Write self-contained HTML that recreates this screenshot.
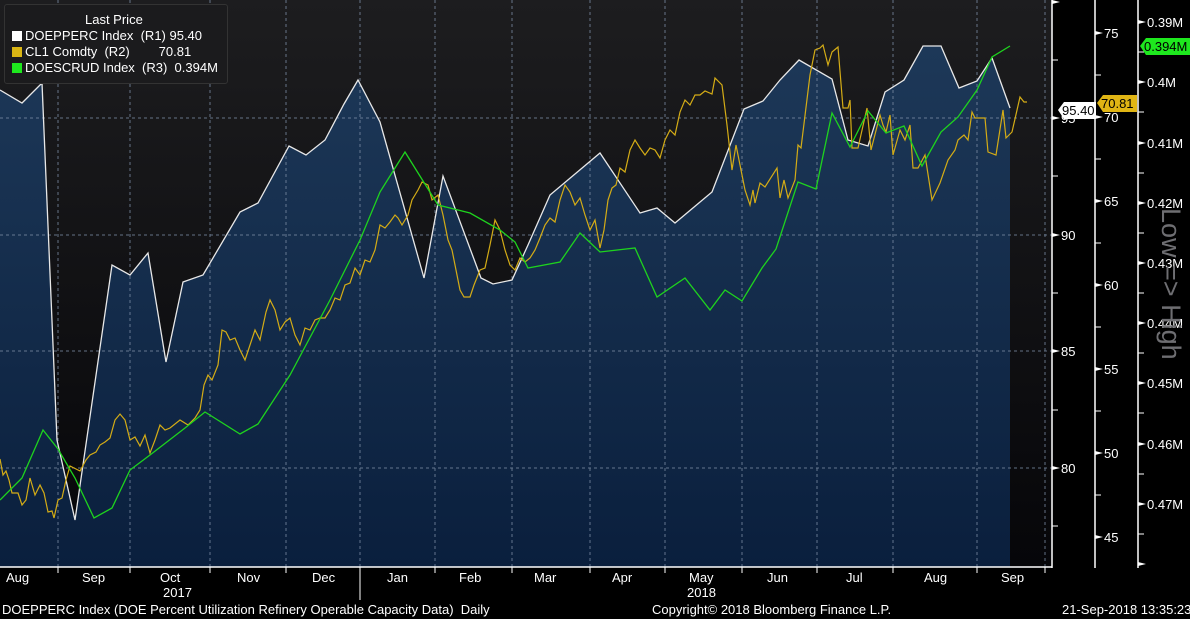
<!DOCTYPE html>
<html><head><meta charset="utf-8"><style>
body{margin:0;background:#000;width:1190px;height:619px;overflow:hidden;font-family:"Liberation Sans Narrow","Liberation Sans",sans-serif;color:#fff}
svg{position:absolute;left:0;top:0}
.lg{position:absolute;left:4px;top:4px;width:222px;height:78px;background:#1b1b1d;border:1px solid #333;border-radius:3px;font-family:"Liberation Sans",sans-serif;font-size:13px;line-height:16px}
.lg div{white-space:pre;position:absolute}
.sq{display:inline-block;width:10px;height:10px;margin-right:3px;vertical-align:-1px}
.ft{position:absolute;font-size:13px;top:602px;white-space:pre}
</style></head><body>
<svg width="1190" height="619" viewBox="0 0 1190 619">
<defs>
<linearGradient id="bg" x1="0" y1="0" x2="0" y2="1"><stop offset="0" stop-color="#1d1d1f"/><stop offset="1" stop-color="#060609"/></linearGradient>
<linearGradient id="fl" x1="0" y1="0" x2="0" y2="1"><stop offset="0" stop-color="#1d3858"/><stop offset="1" stop-color="#0a1f3d"/></linearGradient>
</defs>
<rect x="0" y="0" width="1052" height="567" fill="url(#bg)"/>
<path fill="url(#fl)" stroke="none" d="M0,90 L22,103 L42,83 L57,440 L75,520 L112,265 L130,275 L148,253 L166,362 L183,282 L203,275 L240,212 L258,203 L289,146 L306,155 L325,140 L344,104 L358,80 L380,122 L424,278 L443,176 L481,278 L493,284 L512,280 L528,245 L550,195 L600,153 L640,213 L657,208 L675,223 L712,192 L744,109 L763,101 L780,80 L799,60 L832,79 L848,140 L868,146 L885,92 L904,80 L923,46 L941,46 L959,88 L977,81 L992,58 L1010,108 L1010,567 L0,567Z"/>
<g stroke="#7a8ba3" stroke-width="1" stroke-dasharray="3,3" opacity="0.8">
<line x1="0" y1="118" x2="1052" y2="118"/><line x1="0" y1="235" x2="1052" y2="235"/><line x1="0" y1="351" x2="1052" y2="351"/><line x1="0" y1="468" x2="1052" y2="468"/>
<line x1="58" y1="0" x2="58" y2="567"/><line x1="130" y1="0" x2="130" y2="567"/><line x1="210" y1="0" x2="210" y2="567"/><line x1="286" y1="0" x2="286" y2="567"/><line x1="360" y1="0" x2="360" y2="567"/><line x1="435" y1="0" x2="435" y2="567"/><line x1="512" y1="0" x2="512" y2="567"/><line x1="590" y1="0" x2="590" y2="567"/><line x1="665" y1="0" x2="665" y2="567"/><line x1="742" y1="0" x2="742" y2="567"/><line x1="817" y1="0" x2="817" y2="567"/><line x1="893" y1="0" x2="893" y2="567"/><line x1="977" y1="0" x2="977" y2="567"/><line x1="1045" y1="0" x2="1045" y2="567"/>
</g>
<polyline fill="none" stroke="#e8e8e8" stroke-width="1.3" points="0,90 22,103 42,83 57,440 75,520 112,265 130,275 148,253 166,362 183,282 203,275 240,212 258,203 289,146 306,155 325,140 344,104 358,80 380,122 424,278 443,176 481,278 493,284 512,280 528,245 550,195 600,153 640,213 657,208 675,223 712,192 744,109 763,101 780,80 799,60 832,79 848,140 868,146 885,92 904,80 923,46 941,46 959,88 977,81 992,58 1010,108"/>
<polyline fill="none" stroke="#d4ac16" stroke-width="1.2" points="0,459 3,475 6,471 9,480 12,493 18,493 22,505 26,500 30,478 35,495 40,485 44,493 48,512 52,511 54,518 58,500 62,498 66,480 70,466 74,468 80,471 86,460 90,455 96,452 100,445 105,442 110,438 115,420 120,414 125,420 130,440 135,437 140,446 145,435 150,453 155,440 160,425 165,430 170,428 180,420 188,425 195,418 200,410 204,385 208,375 212,380 218,365 222,330 226,332 230,340 235,338 240,350 245,360 250,345 255,330 260,340 266,312 270,300 275,310 280,330 285,322 290,318 295,335 300,345 305,328 310,330 315,320 320,318 325,318 330,310 335,298 340,300 345,285 350,283 355,268 360,275 365,260 370,262 375,250 380,225 385,228 390,222 395,215 398,218 402,225 408,215 412,200 418,190 422,182 428,185 432,200 438,195 443,215 448,240 452,250 456,270 460,290 464,297 470,297 474,285 480,270 485,268 490,245 495,220 500,230 505,250 510,265 515,270 520,258 525,262 530,258 535,250 540,238 545,225 550,218 555,222 560,200 565,185 570,192 575,205 580,198 585,215 590,230 595,220 600,248 604,230 608,200 612,188 616,185 620,168 625,172 630,150 635,140 640,148 645,155 650,148 655,150 660,158 665,140 670,130 675,135 680,112 685,100 690,105 695,95 700,95 705,91 712,94 715,78 722,85 727,125 732,170 736,145 745,190 750,205 753,190 755,203 760,183 765,187 777,168 780,198 784,180 788,198 795,180 798,145 801,148 810,75 815,50 820,48 823,45 828,65 832,52 838,47 843,108 848,108 850,100 852,148 858,148 867,108 871,150 880,115 883,125 886,132 890,115 893,155 900,130 905,140 910,125 913,168 918,168 925,155 932,200 940,183 948,160 955,150 958,140 964,135 968,140 972,112 975,118 985,118 988,152 996,155 1003,110 1006,138 1012,132 1020,97 1024,102 1027,102"/>
<polyline fill="none" stroke="#1ed31e" stroke-width="1.3" points="0,500 22,478 43,430 58,449 75,478 94,518 112,508 130,470 150,455 185,428 205,412 240,434 258,424 290,375 330,300 360,240 380,192 405,152 438,205 470,213 500,230 515,242 528,268 560,262 580,233 600,252 635,248 657,297 685,278 710,310 725,290 742,301 762,268 776,249 798,182 816,189 832,113 850,147 868,111 886,133 904,126 922,166 941,132 958,117 977,90 992,57 1010,46"/>
<g stroke="#fff" stroke-width="1.5" fill="none">
<line x1="0" y1="567" x2="1052" y2="567"/>
<line x1="1052" y1="0" x2="1052" y2="568"/>
<line x1="1095" y1="0" x2="1095" y2="568"/>
<line x1="1138" y1="0" x2="1138" y2="568"/>
</g>
<g stroke="#fff" stroke-width="1">
<line x1="58" y1="567" x2="58" y2="573"/><line x1="130" y1="567" x2="130" y2="573"/><line x1="210" y1="567" x2="210" y2="573"/><line x1="286" y1="567" x2="286" y2="573"/><line x1="360" y1="567" x2="360" y2="600"/><line x1="435" y1="567" x2="435" y2="573"/><line x1="512" y1="567" x2="512" y2="573"/><line x1="590" y1="567" x2="590" y2="573"/><line x1="665" y1="567" x2="665" y2="573"/><line x1="742" y1="567" x2="742" y2="573"/><line x1="817" y1="567" x2="817" y2="573"/><line x1="893" y1="567" x2="893" y2="573"/><line x1="977" y1="567" x2="977" y2="573"/><line x1="1045" y1="567" x2="1045" y2="573"/>
<line x1="1052" y1="60" x2="1058" y2="60"/><line x1="1052" y1="176" x2="1058" y2="176"/><line x1="1052" y1="293" x2="1058" y2="293"/><line x1="1052" y1="410" x2="1058" y2="410"/><line x1="1052" y1="526" x2="1058" y2="526"/>
<line x1="1095" y1="75" x2="1101" y2="75"/><line x1="1095" y1="159" x2="1101" y2="159"/><line x1="1095" y1="243" x2="1101" y2="243"/><line x1="1095" y1="327" x2="1101" y2="327"/><line x1="1095" y1="411" x2="1101" y2="411"/><line x1="1095" y1="495" x2="1101" y2="495"/>
<line x1="1138" y1="52" x2="1144" y2="52"/><line x1="1138" y1="112" x2="1144" y2="112"/><line x1="1138" y1="173" x2="1144" y2="173"/><line x1="1138" y1="233" x2="1144" y2="233"/><line x1="1138" y1="293" x2="1144" y2="293"/><line x1="1138" y1="353" x2="1144" y2="353"/><line x1="1138" y1="413" x2="1144" y2="413"/><line x1="1138" y1="474" x2="1144" y2="474"/><line x1="1138" y1="534" x2="1144" y2="534"/>
</g>
<g fill="#fff">
<path d="M1052,0 l8,2 l-8,2z"/><path d="M1052,116 l8,2 l-8,2z"/><path d="M1052,233 l8,2 l-8,2z"/><path d="M1052,349 l8,2 l-8,2z"/><path d="M1052,466 l8,2 l-8,2z"/>
<path d="M1095,31 l8,2 l-8,2z"/><path d="M1095,115 l8,2 l-8,2z"/><path d="M1095,199 l8,2 l-8,2z"/><path d="M1095,283 l8,2 l-8,2z"/><path d="M1095,367 l8,2 l-8,2z"/><path d="M1095,451 l8,2 l-8,2z"/><path d="M1095,535 l8,2 l-8,2z"/>
<path d="M1138,20 l8,2 l-8,2z"/><path d="M1138,80 l8,2 l-8,2z"/><path d="M1138,141 l8,2 l-8,2z"/><path d="M1138,201 l8,2 l-8,2z"/><path d="M1138,261 l8,2 l-8,2z"/><path d="M1138,321 l8,2 l-8,2z"/><path d="M1138,381 l8,2 l-8,2z"/><path d="M1138,442 l8,2 l-8,2z"/><path d="M1138,502 l8,2 l-8,2z"/><path d="M1138,562 l8,2 l-8,2z"/>
</g>
<g font-family="Liberation Sans, sans-serif" font-size="13" fill="#fff">
<text x="1061" y="123">95</text><text x="1061" y="240">90</text><text x="1061" y="356">85</text><text x="1061" y="473">80</text>
<text x="1104" y="38">75</text><text x="1104" y="122">70</text><text x="1104" y="206">65</text><text x="1104" y="290">60</text><text x="1104" y="374">55</text><text x="1104" y="458">50</text><text x="1104" y="542">45</text>
<text x="1147" y="27">0.39M</text><text x="1147" y="87">0.4M</text><text x="1147" y="148">0.41M</text><text x="1147" y="208">0.42M</text><text x="1147" y="268">0.43M</text><text x="1147" y="328">0.44M</text><text x="1147" y="388">0.45M</text><text x="1147" y="449">0.46M</text><text x="1147" y="509">0.47M</text>
</g>
<text transform="translate(1162,208) rotate(90)" font-family="Liberation Sans, sans-serif" font-size="27" fill="#6e6e72">Low =&gt; High</text>
<path d="M1058,110 l6,-8 h32 v17 h-32z" fill="#fff"/>
<text x="1062" y="115" font-family="Liberation Sans, sans-serif" font-size="13" fill="#000">95.40</text>
<path d="M1097,103 l6,-8 h34 v17 h-34z" fill="#e0b514"/>
<text x="1101" y="108" font-family="Liberation Sans, sans-serif" font-size="13" fill="#000">70.81</text>
<path d="M1140,46 l6,-8 h44 v17 h-44z" fill="#1ee81e"/>
<text x="1144" y="51" font-family="Liberation Sans, sans-serif" font-size="13" fill="#000">0.394M</text>
<g font-family="Liberation Sans Narrow, Liberation Sans, sans-serif" font-size="13" fill="#fff">
<text x="6" y="582">Aug</text><text x="82" y="582">Sep</text><text x="160" y="582">Oct</text><text x="237" y="582">Nov</text><text x="312" y="582">Dec</text><text x="387" y="582">Jan</text><text x="459" y="582">Feb</text><text x="534" y="582">Mar</text><text x="612" y="582">Apr</text><text x="689" y="582">May</text><text x="767" y="582">Jun</text><text x="846" y="582">Jul</text><text x="924" y="582">Aug</text><text x="1001" y="582">Sep</text>
<text x="163" y="597">2017</text><text x="687" y="597">2018</text>
</g>
</svg>
<div class="lg">
<div style="left:80px;top:7px">Last Price</div>
<div style="left:7px;top:23px"><span class="sq" style="background:#fff"></span>DOEPPERC Index  (R1) 95.40</div>
<div style="left:7px;top:39px"><span class="sq" style="background:#d9b514"></span>CL1 Comdty  (R2)        70.81</div>
<div style="left:7px;top:55px"><span class="sq" style="background:#1ee81e"></span>DOESCRUD Index  (R3)  0.394M</div>
</div>
<div class="ft" style="left:2px">DOEPPERC Index (DOE Percent Utilization Refinery Operable Capacity Data)  Daily</div>
<div class="ft" style="left:652px">Copyright© 2018 Bloomberg Finance L.P.</div>
<div class="ft" style="left:1062px">21-Sep-2018 13:35:23</div>
</body></html>
